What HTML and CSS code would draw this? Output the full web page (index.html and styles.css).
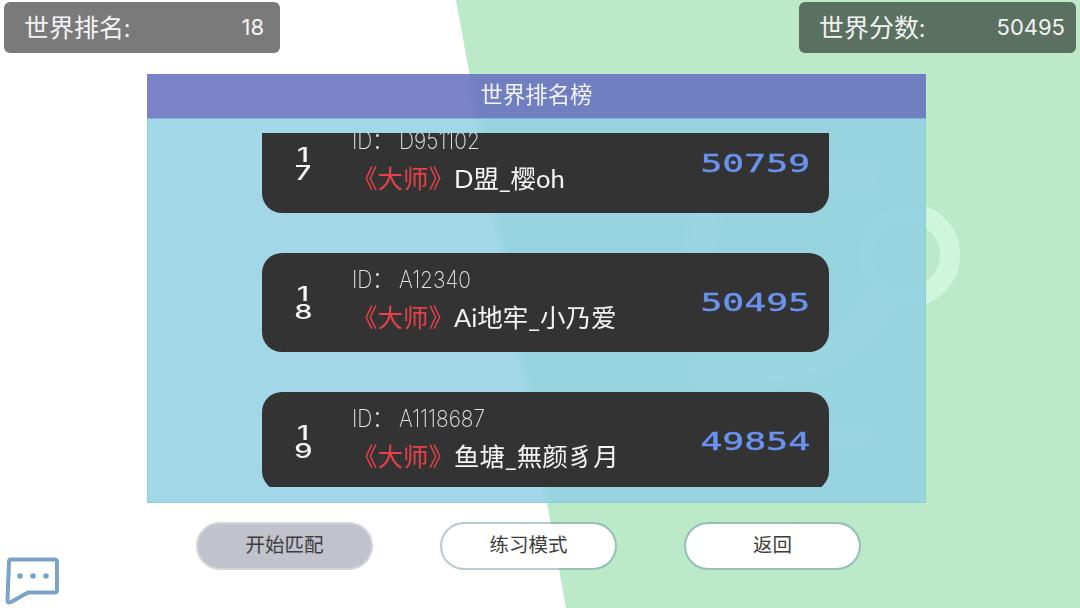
FILE: index.html
```html
<!DOCTYPE html>
<html lang="zh-CN">
<head>
<meta charset="utf-8">
<title>世界排名榜</title>
<link rel="stylesheet" href="styles.css">
</head>
<body>
<svg class="backdrop" viewBox="0 0 1080 608" aria-hidden="true">
  <defs>
    <clipPath id="outside-panel"><rect x="926" y="0" width="154" height="608"></rect></clipPath>
  </defs>
  <polygon class="backdrop-green" points="456,0 1080,0 1080,608 566,608"></polygon>
  <circle class="backdrop-ring-faint" cx="908" cy="255" r="42"></circle>
  <circle class="backdrop-ring" cx="908" cy="255" r="42" clip-path="url(#outside-panel)"></circle>
  <path class="backdrop-shape" d="M880 180 H780 Q700 180 700 250 V290 M880 300 Q840 370 760 372 H690"></path>
  <path class="backdrop-faint" d="M760 435 H870"></path>
</svg>
<main class="page">
  <header class="topbar">
    <div class="stat"><span>世界排名:</span><span class="stat-value">18</span></div>
    <div class="stat"><span>世界分数:</span><span class="stat-value">50495</span></div>
  </header>
  <section class="panel">
    <h1 class="panel-title">世界排名榜</h1>
    <div class="panel-body">
      <div class="list">
        <div class="list-inner">
          <article class="row">
            <div class="rank-cell"><div class="rank">17</div></div>
            <div class="player">
              <div class="player-id">ID： D951102</div>
              <div class="player-name"><span class="title">《大师》</span>D盟_樱oh</div>
            </div>
            <div class="score">50759</div>
          </article>
          <article class="row">
            <div class="rank-cell"><div class="rank">18</div></div>
            <div class="player">
              <div class="player-id">ID： A12340</div>
              <div class="player-name"><span class="title">《大师》</span>Ai地牢_小乃爱</div>
            </div>
            <div class="score">50495</div>
          </article>
          <article class="row">
            <div class="rank-cell"><div class="rank">19</div></div>
            <div class="player">
              <div class="player-id">ID： A1118687</div>
              <div class="player-name"><span class="title">《大师》</span>鱼塘_無颜豸月</div>
            </div>
            <div class="score">49854</div>
          </article>
        </div>
      </div>
    </div>
  </section>
  <nav class="actions">
    <button class="btn btn-active">开始匹配</button>
    <button class="btn">练习模式</button>
    <button class="btn">返回</button>
  </nav>
</main>
<svg class="chat" viewBox="0 0 54 48" aria-hidden="true">
  <path class="chat-line" d="M5 2.500 H49.500 Q52 2.500 52 5 V33 Q52 35.500 49.500 35.500 H23 L6 45 Q2 46.500 2.500 42.500 L4 5 Q4 2.500 5 2.500 Z"></path>
  <circle class="chat-dot" cx="15" cy="19" r="2.800"></circle>
  <circle class="chat-dot" cx="28" cy="19" r="2.800"></circle>
  <circle class="chat-dot" cx="41" cy="19" r="2.800"></circle>
</svg>
</body>
</html>
```
FILE: styles.css
```css
* { box-sizing: border-box; }
html, body { margin: 0; height: 100%; }
body {
  width: 1080px;
  height: 608px;
  overflow: hidden;
  position: relative;
  background: #fff;
  font-family: "Lato", "Noto Sans CJK SC", sans-serif;
}
.backdrop { position: absolute; left: 0; top: 0; width: 1080px; height: 608px; }
.backdrop-green { fill: #bceac8; }
.backdrop-ring { fill: none; stroke: #cff6dd; stroke-width: 20; }
.backdrop-ring-faint { fill: none; stroke: #cff6dd; stroke-width: 20; stroke-opacity: 0.2; }
.backdrop-shape { fill: none; stroke: #d6f7e2; stroke-width: 30; stroke-opacity: 0.35; }
.backdrop-faint { fill: none; stroke: #d6f7e2; stroke-width: 16; stroke-opacity: 0.35; }

.page { position: relative; display: flex; flex-direction: column; height: 608px; padding-top: 2px; }

.topbar { display: flex; justify-content: space-between; padding: 0 4px; }
.stat {
  width: 277px;
  height: 51px;
  display: flex;
  align-items: center;
  justify-content: space-between;
  padding: 0 11px 4px 20px;
  border-radius: 6px;
  background: rgba(0, 0, 0, 0.52);
  color: #f4f4f4;
  font-size: 25px;
}
.stat-value { font-family: "Inter", sans-serif; font-size: 22px; font-weight: 400; padding-top: 3px; }
.stat:first-child { width: 276px; padding-right: 16px; }

.panel { width: 779px; margin: 21px 0 0 147px; backdrop-filter: blur(3px); }
.panel-title {
  margin: 0;
  height: 45px;
  display: flex;
  align-items: center;
  justify-content: center;
  background: rgba(99, 108, 190, 0.85);
  color: #f2f4fb;
  font-size: 22.400px;
  font-weight: 400;
  padding-bottom: 7px;
  border-bottom: 1px solid rgba(140, 200, 225, 0.7);
}
.panel-body {
  height: 384px;
  padding: 14px 96px 16px 114px;
  background: rgba(146, 208, 228, 0.85);
  border: 1px solid rgba(130, 205, 205, 0.7);
  border-top: 0;
}
.list { height: 354px; overflow: hidden; }
.list-inner { display: flex; flex-direction: column; gap: 40px; margin-top: -19px; }

.row {
  flex: none;
  height: 99px;
  display: flex;
  align-items: center;
  border-radius: 20px;
  background: #333;
  color: #f4f4f4;
}
.rank-cell { flex: none; width: 90px; padding-left: 35px; }
.rank {
  width: 12px;
  font-family: "Inter", sans-serif;
  font-size: 20px;
  line-height: 18px;
  font-weight: 500;
  text-align: center;
  word-break: break-all;
  transform: scaleX(1.45);
}
.player { flex: 1; padding-bottom: 3px; }
.player-id {
  font-family: "Inter", "Noto Sans CJK SC", sans-serif;
  font-weight: 200;
  font-size: 23.500px;
  line-height: 26px;
  color: #e4e4e4;
  white-space: nowrap;
  transform: scaleX(0.89);
  transform-origin: left center;
}
.player-name { font-size: 25.500px; line-height: 36px; margin-top: 6px; }
.title { color: #e8414a; }
.score {
  margin-right: 19px;
  font-family: "DejaVu Sans Mono", monospace;
  font-size: 25px;
  font-weight: 400;
  color: #6a93ef;
  -webkit-text-stroke: 0.4px #6a93ef;
  transform: scaleX(1.46);
  transform-origin: right center;
}

.actions { display: flex; gap: 67px; margin: 19px 0 0 196px; }
.btn {
  width: 177px;
  height: 48px;
  border-radius: 24px;
  border: 2px solid rgba(110, 150, 170, 0.5);
  background: #fff padding-box;
  color: #3d3d3d;
  font-family: "Noto Sans CJK SC", sans-serif;
  font-size: 19.500px;
  padding: 0 0 5px;
}
.btn-active { background: #c0c3cb; border-color: #d2d6da; }

.chat { position: absolute; left: 5px; top: 557px; width: 54px; height: 48px; }
.chat-line { fill: none; stroke: #7ba3c8; stroke-width: 4; stroke-linejoin: round; }
.chat-dot { fill: #7ba3c8; }
```
